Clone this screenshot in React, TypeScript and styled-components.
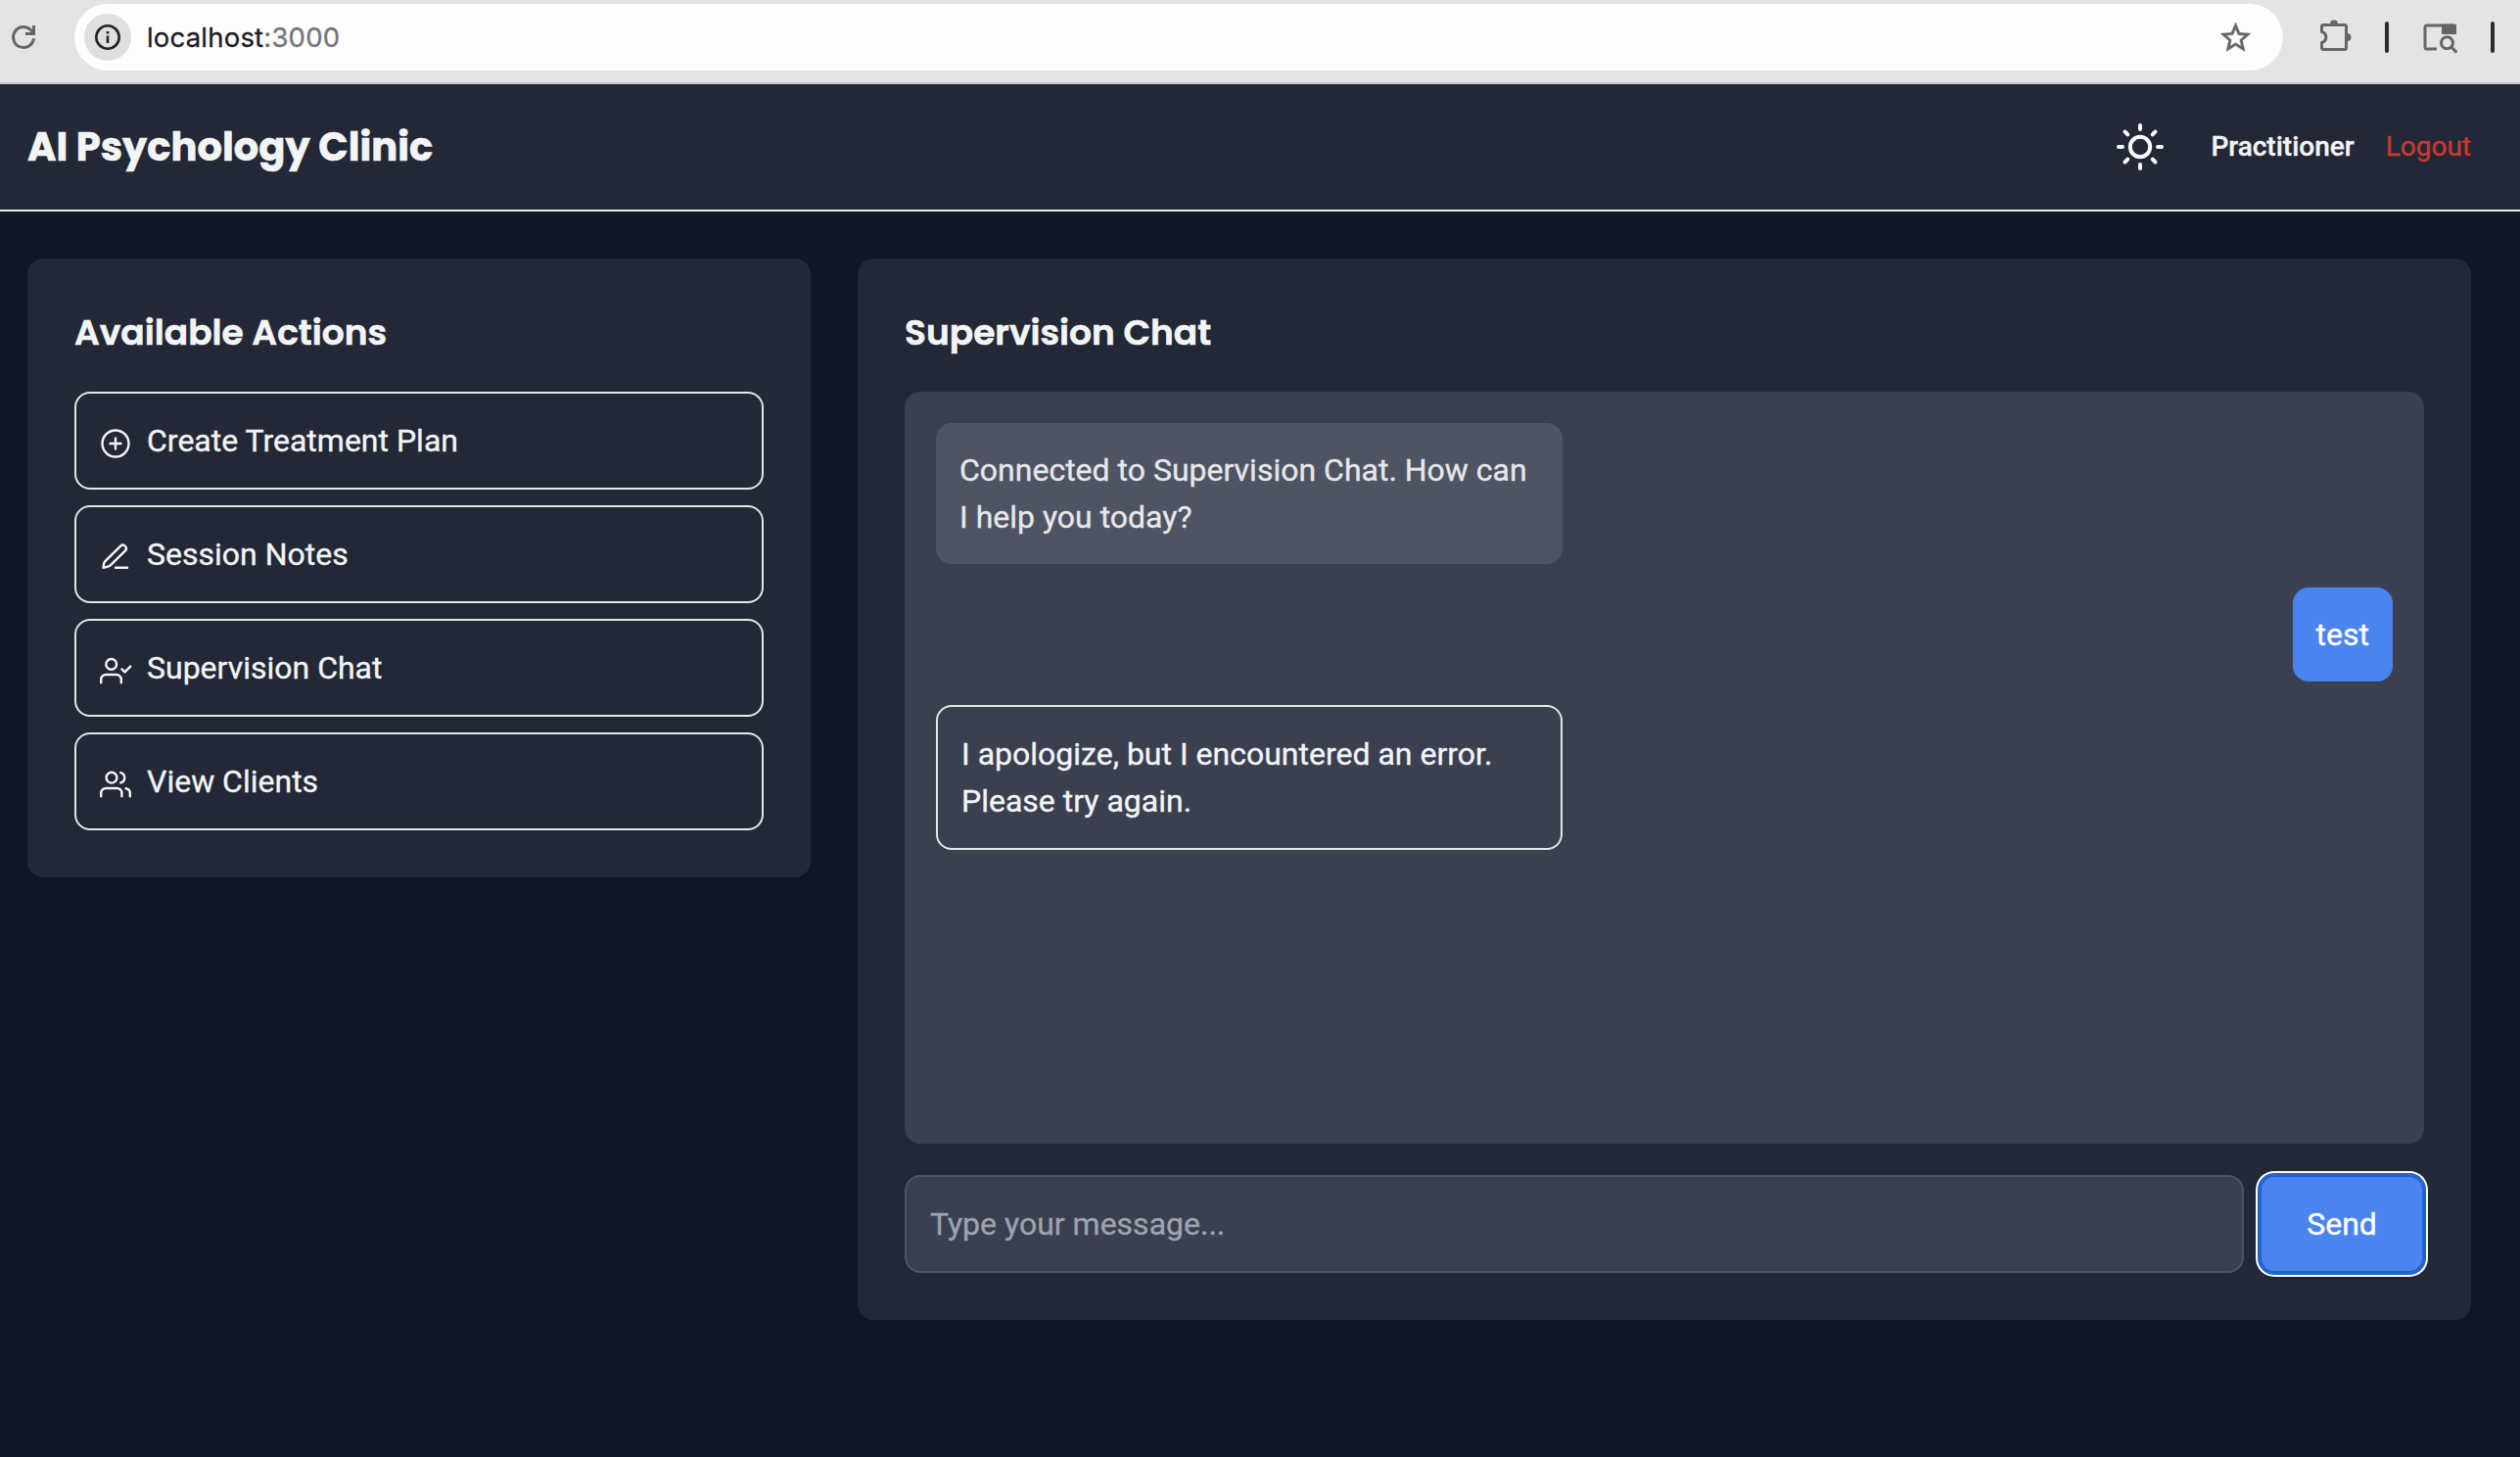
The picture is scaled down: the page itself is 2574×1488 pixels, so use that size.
import React from 'react';
import styled, { createGlobalStyle, css } from 'styled-components';

const Global = createGlobalStyle`
  *, *::before, *::after { box-sizing: border-box; }
  body { margin: 0; background: #111825; font-family: Roboto, "Liberation Sans", sans-serif; font-size: 32px; line-height: 48px; color: #f3f4f6; -webkit-text-stroke: 0.35px currentColor; }
  button, input { font: inherit; }
`;

const Page = styled.div`
  display: flex;
  flex-direction: column;
  height: 1488px;
  overflow: hidden;
`;

const BrowserBar = styled.div`
  display: flex;
  align-items: flex-start;
  height: 86px;
  padding: 4px 0 0 12px;
  background: #e4e4e4;
  border-bottom: 2px solid #c3c8ca;
`;

const BarIcon = styled.svg<{ $w: number; $left?: number; $top?: number }>`
  display: block;
  flex: none;
  width: ${(p) => p.$w}px;
  height: ${(p) => p.$w}px;
  margin-left: ${(p) => p.$left ?? 0}px;
  margin-top: ${(p) => p.$top ?? 0}px;
  overflow: visible;
`;

const AddressBar = styled.div`
  display: flex;
  align-items: center;
  flex: none;
  width: 2256px;
  height: 68px;
  margin-left: 40px;
  padding: 0 30px 0 10px;
  border-radius: 34px;
  background: #fdfdfd;
`;

const InfoBadge = styled.span`
  display: grid;
  place-items: center;
  width: 48px;
  height: 48px;
  border-radius: 50%;
  background: #dfdfdf;
`;

const Url = styled.span`
  flex: 1;
  margin-left: 16px;
  font-family: Inter, Roboto, sans-serif;
  font-size: 27.5px;
  line-height: 40px;
  letter-spacing: 0.2px;
  color: #1f2023;
`;

const Port = styled.span`
  color: #757575;
`;

const BarDivider = styled.span<{ $left: number }>`
  flex: none;
  width: 4px;
  height: 32px;
  margin: 18px 0 0 ${(p) => p.$left}px;
  border-radius: 2px;
  background: #2a2d31;
`;

const Header = styled.header`
  display: flex;
  align-items: center;
  height: 130px;
  padding: 0 50px 0 28px;
  background: #222835;
  border-bottom: 2px solid #e5e7eb;
`;

const heading = css`
  margin: 0;
  font-family: Poppins, Inter, "Open Sans", sans-serif;
  line-height: 56px;
  white-space: nowrap;
  -webkit-text-stroke-width: 0.6px;
`;

const Brand = styled.h1`
  ${heading}
  flex: 1;
  font-size: 40px;
  font-weight: 700;
`;

const ThemeButton = styled.button`
  display: block;
  padding: 0;
  border: 0;
  background: none;
  color: #f9fafb;
`;

const Role = styled.span`
  margin-left: 48px;
  font-size: 28px;
  font-weight: 500;
`;

const Logout = styled.a`
  margin-left: 32px;
  font-size: 28px;
  color: #cb3831;
`;

const Main = styled.main`
  display: grid;
  grid-template-columns: 800px 1648px;
  gap: 48px;
  align-items: start;
  padding: 48px 50px 0 28px;
`;

const Card = styled.section`
  padding: 48px;
  border-radius: 16px;
  background: #222835;
  box-shadow: 0 2px 4px rgba(0, 0, 0, 0.12);
`;

const CardTitle = styled.h2`
  ${heading}
  margin-bottom: 32px;
  font-size: 36px;
  font-weight: 600;
`;

const Actions = styled.div`
  display: flex;
  flex-direction: column;
  gap: 16px;
`;

const Action = styled.button`
  display: flex;
  align-items: center;
  height: 100px;
  padding: 0 24px;
  border: 2px solid #e5e7eb;
  border-radius: 16px;
  background: transparent;
  color: inherit;
  text-align: left;
`;

const ActionIcon = styled.svg`
  flex: none;
  width: 32px;
  height: 32px;
  margin: 6px 16px 0 0;
  fill: none;
  stroke: currentColor;
  stroke-width: 2.4;
  stroke-linecap: round;
  stroke-linejoin: round;
  overflow: visible;
`;

const Messages = styled.div`
  display: flex;
  flex-direction: column;
  align-items: flex-start;
  gap: 24px;
  height: 768px;
  padding: 32px;
  border-radius: 16px;
  background: #3a404f;
`;

const Bubble = styled.div<{ $kind: 'system' | 'user' | 'error' }>`
  padding: 24px;
  border-radius: 16px;
  ${(p) => p.$kind !== 'user' && css`width: 640px;`}
  ${(p) => p.$kind === 'system' && css`background: #4e5461; color: #e5e7eb;`}
  ${(p) => p.$kind === 'user' && css`align-self: flex-end; background: #4a84ee; color: #fff;`}
  ${(p) => p.$kind === 'error' && css`border: 2px solid #e5e7eb;`}
`;

const Composer = styled.form`
  display: flex;
  gap: 16px;
  margin-top: 32px;
`;

const MessageInput = styled.input`
  flex: 1;
  min-width: 0;
  height: 100px;
  padding: 0 24px;
  border: 2px solid #4e5461;
  border-radius: 16px;
  background: #3a404f;
  color: #f3f4f6;
  &::placeholder { color: #9ca3af; opacity: 1; -webkit-text-stroke: 0.35px #9ca3af; }
`;

const SendButton = styled.button`
  width: 168px;
  height: 100px;
  padding: 0;
  border: 0;
  border-radius: 15px;
  background: #4a84ee;
  color: #fff;
  box-shadow: 0 0 0 2px #2063c9, 0 0 0 4px #fff, inset 0 0 0 2px #2063c9;
`;

const actions = [
  {
    label: 'Create Treatment Plan',
    icon: <><circle cx="16" cy="16" r="13.5" /><path d="M10.500 16h11M16 10.500v11" /></>,
  },
  {
    label: 'Session Notes',
    icon: <><path d="M16 26.700h12" /><path d="M21.200 4.600a3.400 3.400 0 0 1 4.800 4.800L10.500 24.700Q9.500 25.700 3.500 26.800 4 21.700 5.200 20.400Z" /></>,
  },
  {
    label: 'Supervision Chat',
    icon: <><circle cx="11.7" cy="9.4" r="5.4" /><path d="M1.200 28.200V25a5 5 0 0 1 5-5h10.600a5 5 0 0 1 5 5v3.200" /><path d="m22.500 14.300 3 3.100 5.700-5.800" /></>,
  },
  {
    label: 'View Clients',
    icon: <><circle cx="12" cy="9.200" r="5.400" /><path d="M1.200 28.200V25a5 5 0 0 1 5-5h11.200a5 5 0 0 1 5 5v3.200" /><path d="M21.300 4.100a5.400 5.400 0 0 1 0 10.400M26.600 20.200a5 5 0 0 1 4.200 5v3" /></>,
  },
];

export default function App() {
  return (
    <Page>
      <Global />
      <BrowserBar>
        <BarIcon $w={24} $top={22} viewBox="0 0 24 24" fill="none" stroke="#666" strokeWidth="3">
          <path d="M22.500 13.300A10.500 10.500 0 1 1 19.500 4.600L22 7.500" />
          <path d="M22.500 0v8.500H14" />
        </BarIcon>
        <AddressBar>
          <InfoBadge>
            <BarIcon $w={26} viewBox="0 0 26 26" fill="none" stroke="#222326" strokeWidth="2.6">
              <circle cx="13" cy="13" r="11.7" />
              <path d="M13 11.500v7.500M13 7v2.600" />
            </BarIcon>
          </InfoBadge>
          <Url>localhost<Port>:3000</Port></Url>
          <BarIcon $w={37} viewBox="0 0 24 24" fill="#666" stroke="#666" strokeWidth="0.3">
            <path d="M22 9.24l-7.19-.62L12 2 9.19 8.63 2 9.24l5.46 4.73L5.82 21 12 17.27 18.18 21l-1.63-7.03L22 9.24zM12 15.4l-3.76 2.27 1-4.28-3.32-2.88 4.38-.38L12 6.1l1.71 4.04 4.38.38-3.32 2.88 1 4.28L12 15.4z" />
          </BarIcon>
        </AddressBar>
        <BarIcon $w={36} $left={36} $top={14} viewBox="0 0 36 36">
          <path
            d="M3.500 14.500V9q0-1.500 1.500-1.500H27q1.500 0 1.500 1.500V31q0 1.500-1.500 1.500H5q-1.500 0-1.500-1.500V25.500c5.800-1.500 5.800-9.500 0-11Z"
            fill="none" stroke="#666" strokeWidth="3" strokeLinejoin="round"
          />
          <path d="M12 6.500a4 4 0 0 1 8 0ZM29.500 16a4 4 0 0 1 0 8Z" fill="#666" />
        </BarIcon>
        <BarDivider $left={32} />
        <BarIcon $w={36} $left={35} $top={20} viewBox="0 0 36 36" fill="none" stroke="#666" strokeWidth="3">
          <path d="M14 26H4Q2 26 2 24V4q0-2 2-2H32" />
          <path d="M19 .500h13.500q1.500 0 1.500 1.500v9H19z" fill="#666" stroke="none" />
          <circle cx="24.500" cy="19.800" r="6" />
          <path d="m28.800 24 5.600 5.600" />
        </BarIcon>
        <BarDivider $left={33} />
      </BrowserBar>

      <Header>
        <Brand>AI Psychology Clinic</Brand>
        <ThemeButton aria-label="Toggle theme">
          <BarIcon $w={48} viewBox="0 0 48 48" fill="none" stroke="currentColor" strokeWidth="4" strokeLinecap="round">
            <circle cx="24" cy="24" r="10.200" />
            <path d="M24 2v4M24 42v4M2 24h4M42 24h4M8.500 8.500l2.800 2.800M36.700 36.700l2.800 2.800M8.500 39.500l2.800-2.800M36.700 11.300l2.800-2.800" />
          </BarIcon>
        </ThemeButton>
        <Role>Practitioner</Role>
        <Logout>Logout</Logout>
      </Header>

      <Main>
        <Card>
          <CardTitle>Available Actions</CardTitle>
          <Actions>
            {actions.map((a) => (
              <Action key={a.label}>
                <ActionIcon viewBox="0 0 32 32">{a.icon}</ActionIcon>
                {a.label}
              </Action>
            ))}
          </Actions>
        </Card>
        <Card>
          <CardTitle>Supervision Chat</CardTitle>
          <Messages>
            <Bubble $kind="system">Connected to Supervision Chat. How can I help you today?</Bubble>
            <Bubble $kind="user">test</Bubble>
            <Bubble $kind="error">I apologize, but I encountered an error. Please try again.</Bubble>
          </Messages>
          <Composer>
            <MessageInput placeholder="Type your message..." />
            <SendButton type="button">Send</SendButton>
          </Composer>
        </Card>
      </Main>
    </Page>
  );
}
